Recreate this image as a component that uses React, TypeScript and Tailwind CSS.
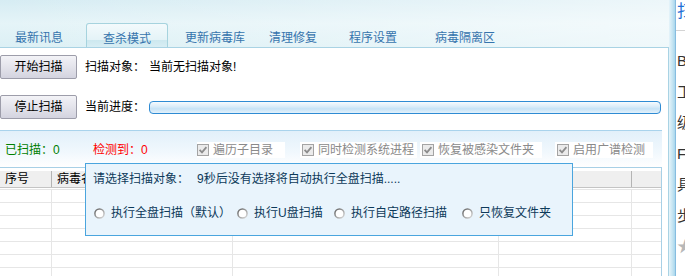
import React from 'react';

const tabs = [
  { label: '最新讯息', ml: 'ml-[15px]', active: false },
  { label: '查杀模式', ml: 'ml-[23px]', active: true },
  { label: '更新病毒库', ml: 'ml-[17px]', active: false },
  { label: '清理修复', ml: 'ml-[24px]', active: false },
  { label: '程序设置', ml: 'ml-[32px]', active: false },
  { label: '病毒隔离区', ml: 'ml-[38px]', active: false },
];

const CheckBox: React.FC = () => (
  <svg width="12" height="12" viewBox="0 0 12 12" className="shrink-0">
    <rect x="0.5" y="0.5" width="11" height="11" fill="#ebebeb" stroke="#a4a4a4" />
    <path d="M2.6 5.8 L5 8.3 L9.4 3.2" stroke="#8c8c8c" strokeWidth="1.8" fill="none" />
  </svg>
);

const Radio: React.FC = () => (
  <svg width="11" height="11" viewBox="0 0 11 11" className="shrink-0">
    <defs>
      <linearGradient id="rg" x1="0" y1="0" x2="1" y2="1">
        <stop offset="0" stopColor="#5f5f5f" />
        <stop offset="1" stopColor="#dcdcdc" />
      </linearGradient>
    </defs>
    <circle cx="5.5" cy="5.5" r="4.6" fill="#ffffff" stroke="url(#rg)" strokeWidth="1.5" />
  </svg>
);

const Btn: React.FC<{ label: string }> = ({ label }) => (
  <button className="w-[77px] h-[24px] shrink-0 border border-[#9d9daa] rounded-[2px] bg-[linear-gradient(180deg,#f3f3f7_0%,#e2e2ea_55%,#d3d3df_100%)] text-[12px] leading-[14px] text-black">
    {label}
  </button>
);

const Option: React.FC<{ label: string; checkPl: string; w: string; ml: string }> = ({ label, checkPl, w, ml }) => (
  <div className={`${w} ${ml} ${checkPl} h-[16px] bg-white flex items-center gap-[4px] text-[#8a8a8a] shrink-0`}>
    <CheckBox />
    <span className="whitespace-nowrap">{label}</span>
  </div>
);

const RadioItem: React.FC<{ label: string; w: string }> = ({ label, w }) => (
  <div className={`${w} flex items-center shrink-0`}>
    <Radio />
    <span className="ml-[6px] whitespace-nowrap">{label}</span>
  </div>
);

const cols = ['w-[52px]', 'w-[181px]', 'w-[266px]', 'w-[133px]', 'w-[29px]'];

const App: React.FC = () => {
  return (
    <div className="relative w-[685px] h-[276px] overflow-hidden bg-white flex font-['Liberation_Sans','Noto_Sans_CJK_SC',sans-serif] text-[12px] leading-[14px] text-black">
      <div className="w-[669px] h-full flex flex-col">
        {/* tab strip */}
        <div className="h-[47px] shrink-0 flex items-end bg-[linear-gradient(90deg,rgba(255,255,255,0)_0%,rgba(255,255,255,0.55)_100%),linear-gradient(180deg,#d6ecf3_0%,#e5f4f8_50%,#dcf0f5_100%)]">
          {tabs.map(t => (
            <div
              key={t.label}
              className={`${t.ml} h-[24px] pt-[8px] text-[#3674ad] whitespace-nowrap ${
                t.active
                  ? 'w-[82px] text-center border border-b-0 border-[#a6d3de] rounded-t-[3px] bg-[linear-gradient(180deg,#f3fafc_0%,#e4f3f7_68%,#cde8ef_70%,#d8eef4_100%)]'
                  : ''
              }`}
            >
              {t.label}
            </div>
          ))}
        </div>

        {/* main panel */}
        <div className="flex-1 min-h-0 border-t border-r border-[#a9d3e4] pt-[7px] flex flex-col">
          <div className="h-[24px] shrink-0 flex items-center">
            <Btn label="开始扫描" />
            <span className="ml-[8px]">扫描对象：</span>
            <span className="ml-[4px]">当前无扫描对象!</span>
          </div>
          <div className="mt-[16px] h-[24px] shrink-0 flex items-center">
            <Btn label="停止扫描" />
            <span className="ml-[8px]">当前进度：</span>
            <div className="ml-[4px] w-[512px] h-[13px] rounded-[4px] border border-[#2f8bd3] bg-[linear-gradient(180deg,#f7fbfe_0%,#dcedf9_40%,#c7e3f6_62%,#e3f1fb_100%)]" />
          </div>

          <div className="mt-[11px] shrink-0 w-[662px] h-px bg-[#a9d3ec]" />

          {/* status band */}
          <div className="w-[662px] h-[36px] shrink-0 pt-[11px] flex bg-[linear-gradient(180deg,#e2f0fa_0%,#f1f8fd_60%,#ffffff_100%)]">
            <div className="ml-[5px] w-[88px] h-[16px] shrink-0 flex items-center text-[#008000]">已扫描：0</div>
            <div className="w-[104px] h-[16px] shrink-0 flex items-center text-[#ff0000]">检测到：0</div>
            <Option label="遍历子目录" checkPl="pl-0" w="w-[88px]" ml="ml-0" />
            <Option label="同时检测系统进程" checkPl="pl-[2px]" w="w-[117px]" ml="ml-[15px]" />
            <Option label="恢复被感染文件夹" checkPl="pl-[2px]" w="w-[122px]" ml="ml-[3px]" />
            <Option label="启用广谱检测" checkPl="pl-[2px]" w="w-[98px]" ml="ml-[13px]" />
          </div>

          {/* table */}
          <div className="w-[662px] flex-1 min-h-0 border-t border-r border-[#a8d0e6] pt-[3px] overflow-hidden">
            <div className="h-[17px] flex bg-[#efefef] border-b border-[#c4c4c4]">
              {['序号', '病毒名称', '', '', ''].map((h, i) => (
                <div
                  key={i}
                  className={`${cols[i]} h-full pl-[5px] flex items-center ${i === 0 || i === 3 ? 'border-r border-[#b4b4b4]' : ''}`}
                >
                  {h}
                </div>
              ))}
            </div>
            <div className="mt-[1px]">
              {Array.from({ length: 7 }).map((_, r) => (
                <div key={r} className="h-[13px] flex border-t border-[#e6e6e6]">
                  {cols.map((c, i) => (
                    <div key={i} className={`${c} h-full ${i < 4 ? 'border-r border-[#e6e6e6]' : ''}`} />
                  ))}
                </div>
              ))}
            </div>
          </div>
        </div>
      </div>

      {/* side strip */}
      <div className="w-[7px] shrink-0 border-r border-[#86bde0] bg-[linear-gradient(90deg,#e6f4fa_0%,#c4e4f2_60%,#a9d6ec_100%)]" />

      {/* clipped right panel */}
      <div className="w-[9px] shrink-0 overflow-hidden bg-white flex flex-col">
        <div className="h-[31px] shrink-0 border-b border-[#d4d4d4] pl-[1px] text-[17px] leading-[24px] text-[#1f6fd6] whitespace-nowrap">扫描</div>
        <div className="mt-[14px] flex flex-col pl-[1px] text-[15px] leading-[31px] text-[#333] whitespace-nowrap">
          <div>BB</div>
          <div>工具</div>
          <div>级别</div>
          <div>F</div>
          <div>具体</div>
          <div>步骤</div>
          <div className="text-[#b8b8b8] text-[16px]">★</div>
        </div>
      </div>

      {/* auto-scan prompt */}
      <div className="absolute left-[85px] top-[163px] w-[488px] h-[73px] border border-[#4aa5de] bg-[#e9f4fc] pl-[7px] pt-[8px] text-[#0d3a5a]">
        <div className="flex whitespace-nowrap">
          <span>请选择扫描对象：</span>
          <span className="ml-[8px]">9秒后没有选择将自动执行全盘扫描.....</span>
        </div>
        <div className="mt-[20px] ml-[1px] flex items-center h-[14px]">
          <RadioItem label="执行全盘扫描（默认）" w="w-[143px]" />
          <RadioItem label="执行U盘扫描" w="w-[97px]" />
          <RadioItem label="执行自定路径扫描" w="w-[128px]" />
          <RadioItem label="只恢复文件夹" w="w-[100px]" />
        </div>
      </div>
    </div>
  );
};

export default App;
